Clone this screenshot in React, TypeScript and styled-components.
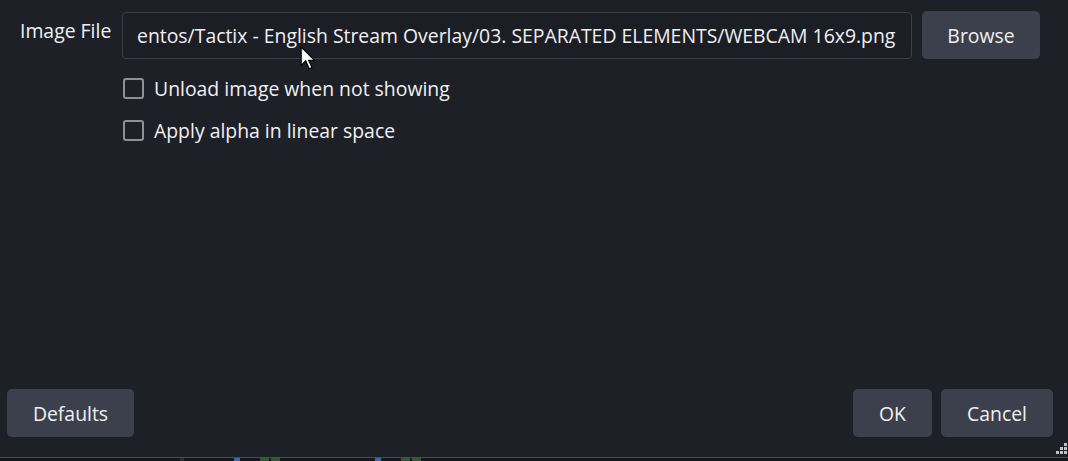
import React from "react";
import styled, { createGlobalStyle } from "styled-components";

const Global = createGlobalStyle`
  html, body { margin: 0; padding: 0; background: #1e2028; }
  body { width: 1068px; height: 461px; overflow: hidden; font-family: "Open Sans", "DejaVu Sans", sans-serif; }
  #root { width: 1068px; height: 461px; }
`;

const Window = styled.div`
  position: relative;
  width: 1068px;
  height: 461px;
  display: flex;
  flex-direction: column;
  background: #1e2028;
  color: #f0f0f2;
  font-size: 19.4px;
`;

const Body = styled.div`
  flex: 1;
  display: flex;
  flex-direction: column;
  padding: 11px 28px 0 20px;
`;

const Row = styled.div`
  display: flex;
  align-items: flex-start;
`;

const Label = styled.div`
  width: 102px;
  padding-top: 8px;
  line-height: 24px;
`;

const PathInput = styled.div`
  width: 790px;
  height: 47px;
  box-sizing: border-box;
  border: 1px solid #3c3f4a;
  border-radius: 4px;
  background: #1c1e25;
  display: flex;
  align-items: center;
  padding-left: 14px;
  white-space: nowrap;
  overflow: hidden;
  margin-top: 1px;
`;

const Button = styled.div<{ $w: number }>`
  width: ${(p) => p.$w}px;
  height: 48px;
  box-sizing: border-box;
  background: #3c404c;
  border-radius: 5px;
  display: flex;
  align-items: center;
  justify-content: center;
  color: #f0f0f2;
`;

const BrowseButton = styled(Button)`
  margin-left: 10px;
`;

const Checks = styled.div`
  display: flex;
  flex-direction: column;
  gap: 21px;
  padding-left: 103px;
  margin-top: 19px;
`;

const CheckRow = styled.div`
  display: flex;
  align-items: center;
  gap: 10px;
  height: 21px;
`;

const Box = styled.div`
  width: 21px;
  height: 21px;
  box-sizing: border-box;
  border: 2px solid #8e919b;
  border-radius: 3px;
`;

const Footer = styled.div`
  display: flex;
  align-items: center;
  padding: 0 15px 20px 7px;
`;

const Spacer = styled.div`
  flex: 1;
`;

const FooterGap = styled.div`
  width: 9px;
`;

const BottomStrip = styled.div`
  height: 3px;
  border-top: 1px solid #4a4c54;
  background: #15161b;
  display: flex;
`;

const StripBit = styled.div<{ $c: string; $w: number; $ml: number }>`
  width: ${(p) => p.$w}px;
  margin-left: ${(p) => p.$ml}px;
  background: ${(p) => p.$c};
`;

const Grip = styled.svg`
  position: absolute;
  right: 0;
  bottom: 5px;
`;

const Cursor = styled.svg`
  position: absolute;
  left: 300px;
  top: 46px;
`;

export default function App() {
  return (
    <>
      <Global />
      <Window>
        <Body>
          <Row>
            <Label>Image File</Label>
            <PathInput>entos/Tactix - English Stream Overlay/03. SEPARATED ELEMENTS/WEBCAM 16x9.png</PathInput>
            <BrowseButton $w={118}>Browse</BrowseButton>
          </Row>
          <Checks>
            <CheckRow>
              <Box />
              <span>Unload image when not showing</span>
            </CheckRow>
            <CheckRow>
              <Box />
              <span>Apply alpha in linear space</span>
            </CheckRow>
          </Checks>
        </Body>
        <Footer>
          <Button $w={127}>Defaults</Button>
          <Spacer />
          <Button $w={79}>OK</Button>
          <FooterGap />
          <Button $w={112}>Cancel</Button>
        </Footer>
        <BottomStrip>
          <StripBit $c="#2b2d33" $w={4} $ml={180} />
          <StripBit $c="#3a66b8" $w={6} $ml={50} />
          <StripBit $c="#2e5a33" $w={9} $ml={20} />
          <StripBit $c="#2e5a33" $w={9} $ml={2} />
          <StripBit $c="#3a66b8" $w={6} $ml={95} />
          <StripBit $c="#2e5a33" $w={9} $ml={20} />
          <StripBit $c="#2e5a33" $w={9} $ml={2} />
        </BottomStrip>
        <Grip width="13" height="13" viewBox="0 0 13 13">
          <rect x="9" y="0" width="3" height="3" fill="#c0c2c8" />
          <rect x="5" y="4" width="3" height="3" fill="#c0c2c8" />
          <rect x="9" y="4" width="3" height="3" fill="#c0c2c8" />
          <rect x="1" y="8" width="3" height="3" fill="#c0c2c8" />
          <rect x="5" y="8" width="3" height="3" fill="#c0c2c8" />
          <rect x="9" y="8" width="3" height="3" fill="#c0c2c8" />
        </Grip>
        <Cursor width="16" height="25" viewBox="0 0 14 22">
          <path d="M1 1 L1 17 L5 13 L8 20 L10.5 19 L7.5 12.5 L12.5 12.5 Z" fill="#ffffff" stroke="#000000" strokeWidth="1" strokeLinejoin="miter" />
        </Cursor>
      </Window>
    </>
  );
}
